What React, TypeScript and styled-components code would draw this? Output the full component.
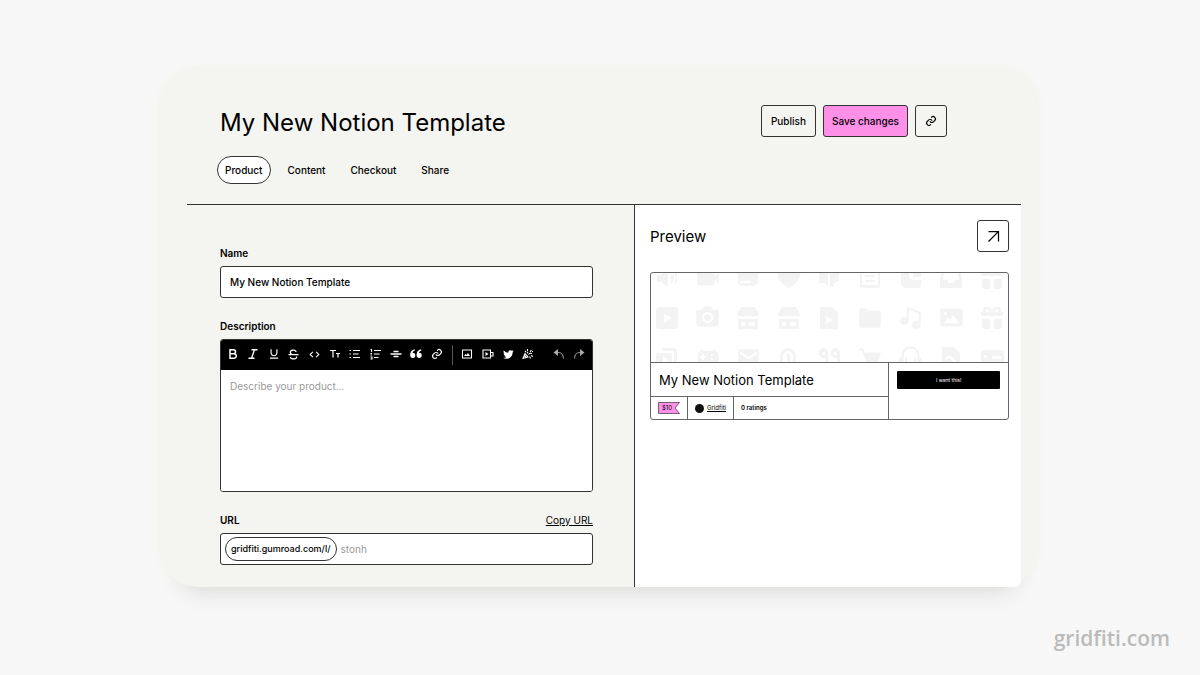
import React from 'react';
import styled, { createGlobalStyle } from 'styled-components';
import {
  BiUnderline, BiStrikethrough, BiCode, BiLink,
  BiSolidQuoteAltLeft, BiLogoTwitter, BiSolidCamera, BiSolidFolder, BiSolidMusic,
  BiSolidImage, BiSolidCart, BiSolidVideo, BiSolidEnvelope, BiHeadphone,
} from 'react-icons/bi';

const ink = '#000';
const line = '#333';
const softLine = '#666';
const paper = '#f4f4f0';
const pink = '#ff90e8';

const GlobalStyle = createGlobalStyle`
  *, *::before, *::after { box-sizing: border-box; }
  body {
    margin: 0;
    background: #f7f7f7;
    color: ${ink};
    font-family: Inter, "Liberation Sans", sans-serif;
    font-size: 10px;
    line-height: 16px;
  }
  button, input, textarea { font: inherit; color: inherit; margin: 0; }
  h1, h2, h3 { margin: 0; font-weight: 400; }
  svg { display: block; }
`;

const Page = styled.div`
  display: flex;
  flex-direction: column;
  min-height: 100vh;
  padding: 67px 160px 23px 158px;
`;

const Window = styled.main`
  padding: 0 19px 0 29px;
  background: ${paper};
  border-radius: 40px;
  box-shadow: 0 28px 24px -24px rgba(0, 0, 0, 0.12), 0 0 8px ${paper};
`;

const Header = styled.header`
  padding: 38px 74px 20px 30px;
  border-bottom: 1px solid ${line};
`;

const TitleRow = styled.div`
  display: flex;
  align-items: center;
  justify-content: space-between;
  margin-bottom: 19px;
  padding-left: 3px;
`;

const Title = styled.h1`
  padding-top: 4px;
  font-size: 24px;
  line-height: 28px;
`;

const Actions = styled.div`
  display: flex;
  gap: 7px;
`;

const Button = styled.button<{ $tone?: 'accent'; $square?: boolean }>`
  display: flex;
  align-items: center;
  justify-content: center;
  height: 32px;
  ${p => (p.$square ? 'width: 32px; padding: 0;' : 'min-width: 55px; padding: 0 8px;')}
  border: 1px solid ${line};
  border-radius: 3px;
  background: ${p => (p.$tone === 'accent' ? pink : 'transparent')};
  font-weight: 500;
`;

const Tabs = styled.nav`
  display: flex;
  gap: 9px;
`;

const Tab = styled.a<{ $active?: boolean }>`
  padding: 0 7px;
  border: 1px solid ${p => (p.$active ? line : 'transparent')};
  border-radius: 14px;
  background: ${p => (p.$active ? '#fff' : 'transparent')};
  color: inherit;
  font-weight: 500;
  line-height: 26px;
  text-decoration: none;
`;

const Columns = styled.div`
  display: grid;
  grid-template-columns: 447fr 387fr;
`;

const Form = styled.form`
  display: flex;
  flex-direction: column;
  gap: 20px;
  padding: 40px 41px 22px 33px;
`;

const Field = styled.div`
  display: flex;
  flex-direction: column;
  gap: 5px;
`;

const LabelRow = styled.div`
  display: flex;
  justify-content: space-between;
`;

const Label = styled.label`
  font-weight: 600;
`;

const CopyLink = styled.a`
  color: inherit;
`;

const InputFrame = styled.div`
  display: flex;
  align-items: center;
  height: 32px;
  border: 1px solid ${line};
  border-radius: 3px;
  background: #fff;
`;

const Input = styled.input<{ $afterPrefix?: boolean }>`
  flex: 1;
  min-width: 0;
  padding: 0 ${p => (p.$afterPrefix ? 4 : 9)}px;
  border: 0;
  background: none;
  font-weight: ${p => (p.$afterPrefix ? 400 : 500)};
  outline: none;
  &::placeholder { color: #999; opacity: 1; }
`;

const Prefix = styled.span`
  margin-left: 4px;
  padding: 0 5px;
  border: 1px solid ${line};
  border-radius: 12px;
  font-size: 9px;
  font-weight: 500;
  line-height: 22px;
`;

const Editor = styled.div`
  display: flex;
  flex-direction: column;
  border: 1px solid ${line};
  border-radius: 3px;
  background: #fff;
  overflow: hidden;
`;

const Toolbar = styled.div`
  display: flex;
  align-items: center;
  height: 30px;
  padding: 0 2px;
  background: #000;
  color: #fff;
`;

const ToolGroup = styled.div<{ $count: number }>`
  display: flex;
  flex: ${p => p.$count} 1 0;
`;

const Tool = styled.button<{ $muted?: boolean }>`
  display: flex;
  flex: 1 1 0;
  align-items: center;
  justify-content: center;
  height: 24px;
  min-width: 0;
  padding: 0 1px 2px 0;
  border: 0;
  background: none;
  color: ${p => (p.$muted ? '#aaa' : '#fff')};
`;

const Divider = styled.span`
  width: 1px;
  height: 20px;
  margin: 0 5px 0 4px;
  background: #555;
`;

const Gap = styled.span`
  width: 10px;
`;

const Textarea = styled.textarea`
  height: 121px;
  padding: 8px 9px;
  border: 0;
  outline: none;
  resize: none;
  &::placeholder { color: #999; opacity: 1; }
`;

const Preview = styled.section`
  padding: 15px 12px 15px 15px;
  border-left: 1px solid ${line};
  border-radius: 0 0 6px 0;
  background: #fff;
`;

const PreviewHead = styled.div`
  display: flex;
  align-items: center;
  justify-content: space-between;
  margin-bottom: 20px;
`;

const PreviewTitle = styled.h2`
  padding-top: 2px;
  font-size: 15px;
  line-height: 24px;
`;

const Product = styled.article`
  border: 1px solid ${softLine};
  border-radius: 3px;
  overflow: hidden;
`;

const Cover = styled.div`
  display: grid;
  grid-template-columns: repeat(9, 1fr);
  grid-auto-rows: 40px;
  align-content: center;
  place-items: center;
  height: 89px;
  margin: 0 -4px;
  overflow: hidden;
  color: #f3f3f3;
`;

const Details = styled.div`
  display: grid;
  grid-template-columns: 239fr 119fr;
  border-top: 1px solid ${softLine};
`;

const Summary = styled.div`
  border-right: 1px solid ${softLine};
`;

const ProductTitle = styled.h3`
  padding: 1px 8px 0;
  font-size: 13px;
  line-height: 32px;
`;

const Facts = styled.div`
  display: flex;
  border-top: 1px solid ${softLine};
  font-size: 6px;
`;

const Fact = styled.div`
  display: flex;
  align-items: center;
  gap: 3px;
  height: 22px;
  padding: 0 7px;
  font-weight: 600;
  & + & { border-left: 1px solid ${softLine}; }
`;

const Price = styled.span`
  position: relative;
  z-index: 0;
  width: 22px;
  padding-left: 4px;
  font-weight: 400;
  line-height: 12px;
`;

const Flag = styled.svg`
  position: absolute;
  inset: 0;
  z-index: -1;
`;

const Avatar = styled.span`
  width: 9px;
  height: 9px;
  border-radius: 50%;
  background: #111;
`;

const Seller = styled.a`
  color: inherit;
  font-weight: 400;
`;

const Buy = styled.div`
  padding: 8px;
`;

const BuyButton = styled.button`
  display: block;
  width: 100%;
  height: 18px;
  padding: 0;
  border: 0;
  border-radius: 1px;
  background: #000;
  color: #fff;
  font-size: 5px;
`;

const Watermark = styled.footer`
  margin: auto -130px 0 0;
  color: #bbb;
  font-family: "Open Sans", "Noto Sans", sans-serif;
  font-size: 21px;
  font-weight: 600;
  line-height: 28px;
  text-align: right;
`;

type GlyphProps = { size?: number; weight?: number; children: React.ReactNode };

const Glyph = ({ size = 12, weight = 2, children }: GlyphProps) => (
  <svg width={size} height={size} viewBox="0 0 24 24" fill="none" stroke="currentColor" strokeWidth={weight} aria-hidden="true">
    {children}
  </svg>
);

const Solid = ({ d }: { d: string }) => (
  <svg width={24} height={24} viewBox="0 0 24 24" fill="currentColor" fillRule="evenodd" aria-hidden="true">
    <path d={d} />
  </svg>
);

const Bold = () => (
  <Glyph weight={3}><path d="M6 3.500h7a4 4 0 0 1 0 8H6zM6 11.500h8a4.500 4.500 0 0 1 0 9H6z" /></Glyph>
);
const Italic = () => (
  <Glyph weight={2.6}><path d="M9 3.500h12M3 20.500h12M15 3.500l-6 17" /></Glyph>
);
const TextSize = () => (
  <Glyph weight={2.4}><path d="M2 5h12M8 5v14M14 11h8M18 11v8" /></Glyph>
);
const Bullets = () => (
  <Glyph weight={2.4}><path d="M8 5h14M8 12h11M8 19h14M1 5h3M1 12h3M1 19h3" /></Glyph>
);
const NumberedList = () => (
  <Glyph weight={2.2}><path d="M8 5h14M8 12h11M8 19h9M1 3h2v5M1 11h3M1 14h3M1 18h3v4H1" /></Glyph>
);
const Rule = () => (
  <Glyph weight={2.6}><path d="M1 12h22M7 7h10M7 17h10" /></Glyph>
);
const Picture = () => (
  <Glyph weight={2.2}>
    <path d="M3 4h18v16H3z" />
    <path d="M6 16l3-4 2 2 3-4 4 6z" fill="currentColor" stroke="none" />
  </Glyph>
);
const Clip = () => (
  <Glyph weight={2.2}>
    <path d="M2 4h15v16H2zM17 9h5v7h-5" />
    <path d="M7 8v8l6-4z" fill="currentColor" stroke="none" />
  </Glyph>
);
const Confetti = () => (
  <Glyph weight={2.2}>
    <path d="M2 21l4-10 6 7zM5 15l4 4M10 10l2-2M13 13c2-3 4-3 7-2M11 6V2M16 8l3-4M18 15l4 2M15 17l2 4M20 7h2M6 6l2 2" />
  </Glyph>
);
const Undo = () => (
  <Glyph>
    <path d="M8 9h3c6 0 9 4 10 12" />
    <path d="M10 2v14L1 9z" fill="currentColor" stroke="none" />
  </Glyph>
);
const Redo = () => (
  <Glyph>
    <path d="M16 9h-3C7 9 4 13 3 21" />
    <path d="M14 2v14l9-7z" fill="currentColor" stroke="none" />
  </Glyph>
);

const tools: [string, React.ReactNode][] = [
  ['Bold', <Bold />],
  ['Italic', <Italic />],
  ['Underline', <BiUnderline size={14} />],
  ['Strikethrough', <BiStrikethrough size={15} />],
  ['Code', <BiCode size={13} />],
  ['Text size', <TextSize />],
  ['Bulleted list', <Bullets />],
  ['Numbered list', <NumberedList />],
  ['Divider', <Rule />],
  ['Quote', <BiSolidQuoteAltLeft size={14} />],
  ['Link', <BiLink size={14} />],
];

const inserts: [string, React.ReactNode][] = [
  ['Image', <Picture />],
  ['Video', <Clip />],
  ['Twitter post', <BiLogoTwitter size={13} />],
  ['More', <Confetti />],
];

const history: [string, React.ReactNode][] = [
  ['Undo', <Undo />],
  ['Redo', <Redo />],
];

const ToolSet = ({ items, muted }: { items: [string, React.ReactNode][]; muted?: boolean }) => (
  <ToolGroup $count={items.length}>
    {items.map(([name, icon]) => (
      <Tool key={name} type="button" aria-label={name} $muted={muted}>{icon}</Tool>
    ))}
  </ToolGroup>
);

const store = 'M5 1h14l4 7v2H1V8zM2 13h20v10H2zM5 16v4h4v-4zM13 16v4h6v-4z';
const gift = 'M7 1c2 0 4 1 5 3 1-2 3-3 5-3 3 0 5 2 4 5h2v4H1V6h2C2 3 4 1 7 1zM6 4v2h4C9 4 7 3 6 4zM18 4c-1-1-3 0-4 2h4zM2 13h8v10H5a3 3 0 0 1-3-3zM14 13h8v7a3 3 0 0 1-3 3h-5z';

const coverIcons: React.ReactNode[] = [
  <Solid d="M2 9h4l7-6v18l-7-5H2zM16 7c4 2 4 8 0 11zM20 4c3 5 3 11 0 15l-1-2c2-4 2-7 0-11z" />,
  <BiSolidVideo size={26} />,
  <Solid d="M2 3h20v14l-4 3H5l-3-3zM4 15h11v2H4z" />,
  <Solid d="M1 9a5 5 0 0 1 11-3 5 5 0 0 1 11 3c0 6-6 10-11 13C7 19 1 15 1 9z" />,
  <Solid d="M2 3h9v18l-4-4H2zM13 3h9v12l-5 2-1 4h-3z" />,
  <Solid d="M6 1h12a4 4 0 0 1 4 4v14a3 3 0 0 1-3 3H5a3 3 0 0 1-3-3V5a4 4 0 0 1 4-4zM4 5v14h16V5zM7 9h10v2H7zM7 14h10v2H7z" />,
  <Solid d="M2 2h8v9l3 3h9v5a3 3 0 0 1-3 3H7a5 5 0 0 1-5-5zM14 3h8v8h-8z" />,
  <Solid d="M3 2h18l2 12v8H1v-8zM5 5l-1 9h4l2 3h4l2-3h4l-1-9z" />,
  <Solid d={gift} />,

  <Solid d="M4 1h16a3 3 0 0 1 3 3v16a3 3 0 0 1-3 3H4a3 3 0 0 1-3-3V4a3 3 0 0 1 3-3zM9 7v10l8-5z" />,
  <BiSolidCamera size={27} />,
  <Solid d={store} />,
  <Solid d={store} />,
  <Solid d="M3 1h12l6 6v16H3zM9 10v8l7-4z" />,
  <BiSolidFolder size={26} />,
  <BiSolidMusic size={26} />,
  <BiSolidImage size={27} />,
  <Solid d={gift} />,

  <Solid d="M7 2h12a3 3 0 0 1 3 3v12h-3V5H7zM4 7h10a3 3 0 0 1 3 3v12H1V10a3 3 0 0 1 3-3zM8 10v9l6-4z" />,
  <Solid d="M6 3l3 2h6l3-2 4 4 1 12-4 2-4-5H9l-4 5-4-2L2 7zM6 8v2H4v2h2v2h2v-2h2v-2H8V8zM15 8v2h2V8zM15 12v2h2v-2z" />,
  <BiSolidEnvelope size={25} />,
  <Solid d="M11 2a8 8 0 0 1 8 8v12h-3V10a5 5 0 0 0-10 0v12H3V10a8 8 0 0 1 8-8zM10 8h3v14h-3zM21 15h2v7h-2z" />,
  <Solid d="M6 2a5 5 0 0 1 5 5v15H8V12a5 5 0 1 1-2-10zM5 6v3h3V6zM18 2a5 5 0 0 1 5 5v15h-3V12a5 5 0 1 1-2-10zM17 6v3h3V6z" />,
  <BiSolidCart size={26} />,
  <BiHeadphone size={27} />,
  <Solid d="M3 1h12l6 6v16H3zM6 12c5-5 10 0 12 6l-2 2c-2-6-6-9-10-6z" />,
  <Solid d="M3 4h19a2 2 0 0 1 2 2v14H1V6a2 2 0 0 1 2-2zM12 10v3h9v-3zM4 9v3h3V9z" />,
];

export default function App() {
  return (
    <>
      <GlobalStyle />
      <Page>
        <Window>
          <Header>
            <TitleRow>
              <Title>My New Notion Template</Title>
              <Actions>
                <Button type="button">Publish</Button>
                <Button type="button" $tone="accent">Save changes</Button>
                <Button type="button" $square aria-label="Copy link"><BiLink size={14} /></Button>
              </Actions>
            </TitleRow>
            <Tabs>
              <Tab href="#product" $active>Product</Tab>
              <Tab href="#content">Content</Tab>
              <Tab href="#checkout">Checkout</Tab>
              <Tab href="#share">Share</Tab>
            </Tabs>
          </Header>
          <Columns>
            <Form>
              <Field>
                <Label htmlFor="name">Name</Label>
                <InputFrame>
                  <Input id="name" defaultValue="My New Notion Template" />
                </InputFrame>
              </Field>
              <Field>
                <Label htmlFor="description">Description</Label>
                <Editor>
                  <Toolbar role="toolbar" aria-label="Formatting">
                    <ToolSet items={tools} />
                    <Divider />
                    <ToolSet items={inserts} />
                    <Gap />
                    <ToolSet items={history} muted />
                  </Toolbar>
                  <Textarea id="description" placeholder="Describe your product..." />
                </Editor>
              </Field>
              <Field>
                <LabelRow>
                  <Label htmlFor="url">URL</Label>
                  <CopyLink href="#copy">Copy URL</CopyLink>
                </LabelRow>
                <InputFrame>
                  <Prefix>gridfiti.gumroad.com/l/</Prefix>
                  <Input id="url" placeholder="stonh" $afterPrefix />
                </InputFrame>
              </Field>
            </Form>
            <Preview>
              <PreviewHead>
                <PreviewTitle>Preview</PreviewTitle>
                <Button type="button" $square aria-label="Open preview">
                  <Glyph size={15}><path d="M4 20L19 5M4 4h16v16" /></Glyph>
                </Button>
              </PreviewHead>
              <Product>
                <Cover>
                  {coverIcons.map((icon, i) => <React.Fragment key={i}>{icon}</React.Fragment>)}
                </Cover>
                <Details>
                  <Summary>
                    <ProductTitle>My New Notion Template</ProductTitle>
                    <Facts>
                      <Fact>
                        <Price>
                          <Flag width="22" height="12" viewBox="0 0 22 12" fill={pink} stroke={line} strokeWidth="0.7" aria-hidden="true">
                            <path d="M.5.5h21L17 6l4.500 5.500H.5z" />
                          </Flag>
                          $10
                        </Price>
                      </Fact>
                      <Fact>
                        <Avatar />
                        <Seller href="#seller">Gridfiti</Seller>
                      </Fact>
                      <Fact>0 ratings</Fact>
                    </Facts>
                  </Summary>
                  <Buy>
                    <BuyButton type="button">I want this!</BuyButton>
                  </Buy>
                </Details>
              </Product>
            </Preview>
          </Columns>
        </Window>
        <Watermark>gridfiti.com</Watermark>
      </Page>
    </>
  );
}
